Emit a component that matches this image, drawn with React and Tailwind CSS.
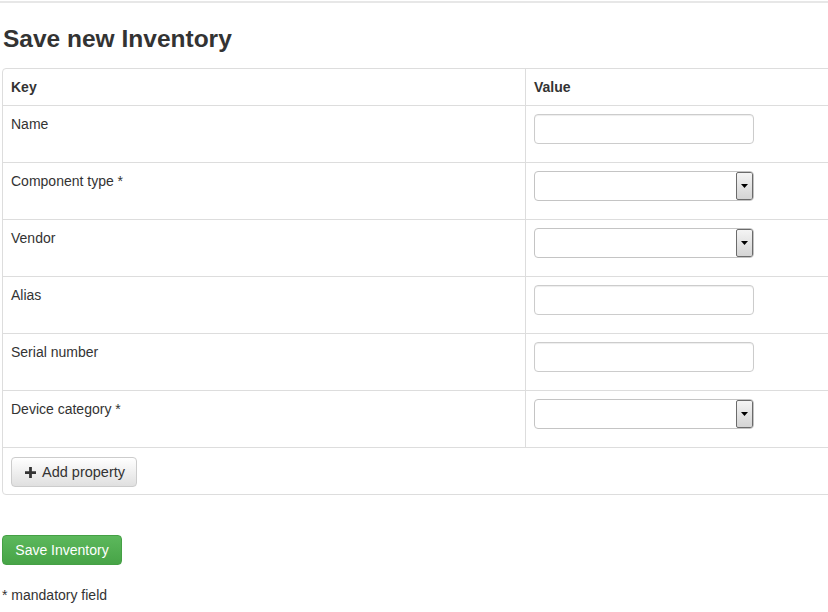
import React from "react";

const rows = [
  { label: "Name", type: "input" },
  { label: "Component type *", type: "select" },
  { label: "Vendor", type: "select" },
  { label: "Alias", type: "input" },
  { label: "Serial number", type: "input" },
  { label: "Device category *", type: "select" },
];

function TextInput() {
  return (
    <div className="w-[220px] h-[30px] rounded-[4px] border border-[#cccccc] bg-white shadow-[inset_0_1px_1px_rgba(0,0,0,0.075)]" />
  );
}

function SelectBox() {
  return (
    <div className="w-[220px] h-[30px] rounded-[4px] border border-[#c4c4c4] bg-white flex justify-end overflow-hidden">
      <div className="w-[17px] h-full border border-[#6b6b6b] rounded-[2px] bg-gradient-to-b from-[#f4f4f4] to-[#d4d4d4] flex items-center justify-center">
        <svg width="7" height="4" viewBox="0 0 7 4">
          <path d="M0 0 L7 0 L3.5 4 Z" fill="#000" />
        </svg>
      </div>
    </div>
  );
}

export default function App() {
  return (
    <div
      className="w-[828px] h-[612px] overflow-hidden bg-white text-[#333333] text-[14px] leading-[20px]"
      style={{ fontFamily: '"Liberation Sans", Arial, sans-serif' }}
    >
      <div className="h-[3px] border-b-2 border-[#e7e7e7]" />
      <div className="px-[2px]">
        <h1 className="mt-[21px] text-[24.5px] leading-[30px] font-bold text-[#333333] pl-[1px]">
          Save new Inventory
        </h1>
        <div className="mt-[14px] w-[900px] border border-[#dddddd] rounded-[4px]">
          <div className="flex h-[37px] border-b border-[#dddddd] font-bold">
            <div className="w-[523px] border-r border-[#dddddd] px-[8px] pt-[8px]">Key</div>
            <div className="flex-1 px-[8px] pt-[8px]">Value</div>
          </div>
          {rows.map((r) => (
            <div key={r.label} className="flex h-[57px] border-b border-[#dddddd]">
              <div className="w-[523px] border-r border-[#dddddd] px-[8px] pt-[8px]">{r.label}</div>
              <div className="flex-1 px-[8px] pt-[8px]">
                {r.type === "input" ? <TextInput /> : <SelectBox />}
              </div>
            </div>
          ))}
          <div className="h-[46px] px-[8px] pt-[9px]">
            <button className="h-[30px] w-[126px] pl-[13px] flex items-center gap-[6px] rounded-[4px] border border-[#cccccc] bg-gradient-to-b from-white to-[#e0e0e0] text-[#333333] text-[14.5px]">
              <svg width="11" height="11" viewBox="0 0 12 12">
                <path d="M4.5 0 H7.5 V4.5 H12 V7.5 H7.5 V12 H4.5 V7.5 H0 V4.5 H4.5 Z" fill="#333" />
              </svg>
              <span>Add property</span>
            </button>
          </div>
        </div>
        <button className="mt-[40px] h-[30px] w-[120px] rounded-[4px] border border-[#45a045] bg-gradient-to-b from-[#5cb85c] to-[#47a447] text-white text-[14px] flex items-center justify-center">
          Save Inventory
        </button>
        <p className="mt-[20px]">* mandatory field</p>
      </div>
    </div>
  );
}
